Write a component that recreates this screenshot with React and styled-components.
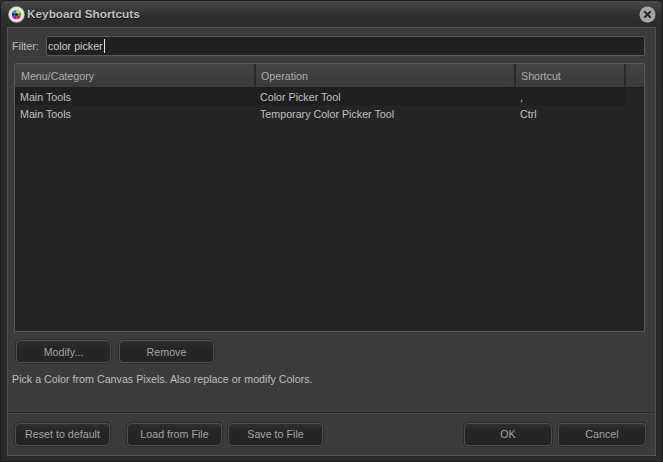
import React from 'react'
import styled, { createGlobalStyle } from 'styled-components'

const GlobalStyle = createGlobalStyle`
  html, body {
    margin: 0;
    padding: 0;
    background: #2a2a2a;
  }
  * {
    box-sizing: border-box;
  }
`

const Dialog = styled.div`
  width: 663px;
  height: 462px;
  display: flex;
  flex-direction: column;
  padding: 0 6px 5px;
  overflow: hidden;
  font-family: 'Liberation Sans', sans-serif;
  font-size: 10.7px;
  color: #bcbcbc;
  background: linear-gradient(#4a4a4a 0, #2f2f2f 14px, #2b2b2b 27px, #2a2a2a 100%);
  border: 1px solid #1c1c1c;
  border-radius: 6px 6px 0 0;
`

const TitleBar = styled.div`
  flex: 0 0 26px;
  display: flex;
  align-items: center;
  gap: 2px;
  padding: 0 0 0 1px;
`

const Title = styled.div`
  flex: 1;
  font-size: 11.8px;
  font-weight: 700;
  color: #c0c0c0;
  text-shadow: 0 1px 1px #111;
`

const Panel = styled.div`
  flex: 1;
  display: flex;
  flex-direction: column;
  min-height: 0;
  background: #3c3c3c;
  border: 1px solid #555;
  border-right-color: #505050;
`

const Main = styled.div`
  flex: 1;
  display: flex;
  flex-direction: column;
  min-height: 0;
  padding: 8px 10px 0 6px;
`

const FilterRow = styled.div`
  display: flex;
  align-items: center;
  height: 20px;
  margin-left: -2px;
  margin-bottom: 7px;
`

const FilterLabel = styled.label`
  flex: 0 0 34px;
`

const FilterInput = styled.div`
  flex: 1;
  height: 20px;
  display: flex;
  align-items: center;
  padding-left: 1px;
  color: #cdcdcd;
  background: #202020;
  border: 1px solid #5a5a5a;
  border-radius: 2px;
`

const Caret = styled.span`
  display: inline-block;
  width: 1px;
  height: 14px;
  margin-left: 1px;
  background: #e4e4e4;
`

const Table = styled.div`
  flex: 0 0 269px;
  display: flex;
  flex-direction: column;
  background: #242424;
  border: 1px solid #5a5a5a;
  border-radius: 2px 2px 0 0;
`

const HeaderRow = styled.div`
  flex: 0 0 24px;
  display: grid;
  grid-template-columns: 241px 260px 110px 1fr;
  background: linear-gradient(#444, #3a3a3a);
  border-bottom: 1px solid #1e1e1e;
`

const HeaderCell = styled.div`
  display: flex;
  align-items: center;
  padding-left: 5px;
  color: #acacac;
  border-right: 2px solid #2a2a2a;
  &:first-child {
    padding-left: 6px;
  }
  &:last-child {
    border-right: 0;
  }
`

const Row = styled.div`
  flex: 0 0 17px;
  width: 610px;
  display: grid;
  grid-template-columns: 240px 260px 110px;
  align-items: center;
  color: #c0c0c0;
  background: ${props => (props.$selected ? '#1f1f1f' : 'transparent')};
`

const Cell = styled.div`
  padding-left: 5px;
  white-space: nowrap;
`

const ButtonRow = styled.div`
  display: flex;
  gap: 8px;
  margin-top: 8px;
  padding-left: 2px;
`

const Button = styled.button`
  width: ${props => props.$width || 95}px;
  height: 23px;
  padding: 0;
  font: inherit;
  color: #a4a4a4;
  background: linear-gradient(#2f2f2f, #262626 30%, #242424);
  border: 1px solid #4e4e4e;
  border-radius: 4px;
  box-shadow: 0 0 0 1px #2e2e2e;
`

const Hint = styled.div`
  margin-top: 10px;
  margin-left: -2px;
`

const Footer = styled.div`
  flex: 0 0 43px;
  display: flex;
  align-items: center;
  padding: 0 9px 0 7px;
  border-top: 1px solid #2a2a2a;
  box-shadow: inset 0 1px 0 #474747;
`

const Spacer = styled.div`
  flex: 1;
`

const LeftGroup = styled.div`
  display: flex;
  gap: 6px;
  margin-left: 17px;
`

const RightGroup = styled.div`
  display: flex;
  gap: 6px;
`

function AppIcon() {
  const slices = ['#e8e020', '#42b02c', '#e02020', '#b018b8', '#1838c8', '#18b0c8']
  const r = 4.8
  return (
    <svg width="17" height="17" viewBox="0 0 17 17">
      <circle cx="8.5" cy="8.5" r="8" fill="#ece8e0" />
      <circle cx="8.5" cy="8.5" r="8" fill="none" stroke="#8f8f8f" strokeWidth="0.6" />
      {slices.map((c, i) => {
        const a0 = (i * 60 - 90) * (Math.PI / 180)
        const a1 = ((i + 1) * 60 - 90) * (Math.PI / 180)
        return (
          <path
            key={c}
            d={`M8.5 8.5 L${8.5 + r * Math.cos(a0)} ${8.5 + r * Math.sin(a0)} A${r} ${r} 0 0 1 ${8.5 + r * Math.cos(a1)} ${8.5 + r * Math.sin(a1)} Z`}
            fill={c}
          />
        )
      })}
      <circle cx="8.5" cy="8.5" r="1.3" fill="#111" />
    </svg>
  )
}

function CloseIcon() {
  return (
    <svg width="17" height="17" viewBox="0 0 17 17">
      <circle cx="8.5" cy="8.5" r="8" fill="#a6a6a6" />
      <path d="M5.2 5.2 L11.8 11.8 M11.8 5.2 L5.2 11.8" stroke="#2a2a2a" strokeWidth="2" />
    </svg>
  )
}

const rows = [
  { id: 1, menu: 'Main Tools', op: 'Color Picker Tool', key: ',', selected: true },
  { id: 2, menu: 'Main Tools', op: 'Temporary Color Picker Tool', key: 'Ctrl' },
]

export default function App() {
  return (
    <Dialog>
      <GlobalStyle />
      <TitleBar>
        <AppIcon />
        <Title>Keyboard Shortcuts</Title>
        <CloseIcon />
      </TitleBar>
      <Panel>
        <Main>
          <FilterRow>
            <FilterLabel>Filter:</FilterLabel>
            <FilterInput>
              color picker
              <Caret />
            </FilterInput>
          </FilterRow>
          <Table>
            <HeaderRow>
              <HeaderCell>Menu/Category</HeaderCell>
              <HeaderCell>Operation</HeaderCell>
              <HeaderCell>Shortcut</HeaderCell>
              <HeaderCell />
            </HeaderRow>
            {rows.map(r => (
              <Row key={r.id} $selected={r.selected}>
                <Cell>{r.menu}</Cell>
                <Cell>{r.op}</Cell>
                <Cell>{r.key}</Cell>
              </Row>
            ))}
          </Table>
          <ButtonRow>
            <Button>Modify...</Button>
            <Button>Remove</Button>
          </ButtonRow>
          <Hint>Pick a Color from Canvas Pixels. Also replace or modify Colors.</Hint>
        </Main>
        <Footer>
          <Button>Reset to default</Button>
          <LeftGroup>
            <Button>Load from File</Button>
            <Button>Save to File</Button>
          </LeftGroup>
          <Spacer />
          <RightGroup>
            <Button $width={88}>OK</Button>
            <Button $width={88}>Cancel</Button>
          </RightGroup>
        </Footer>
      </Panel>
    </Dialog>
  )
}
